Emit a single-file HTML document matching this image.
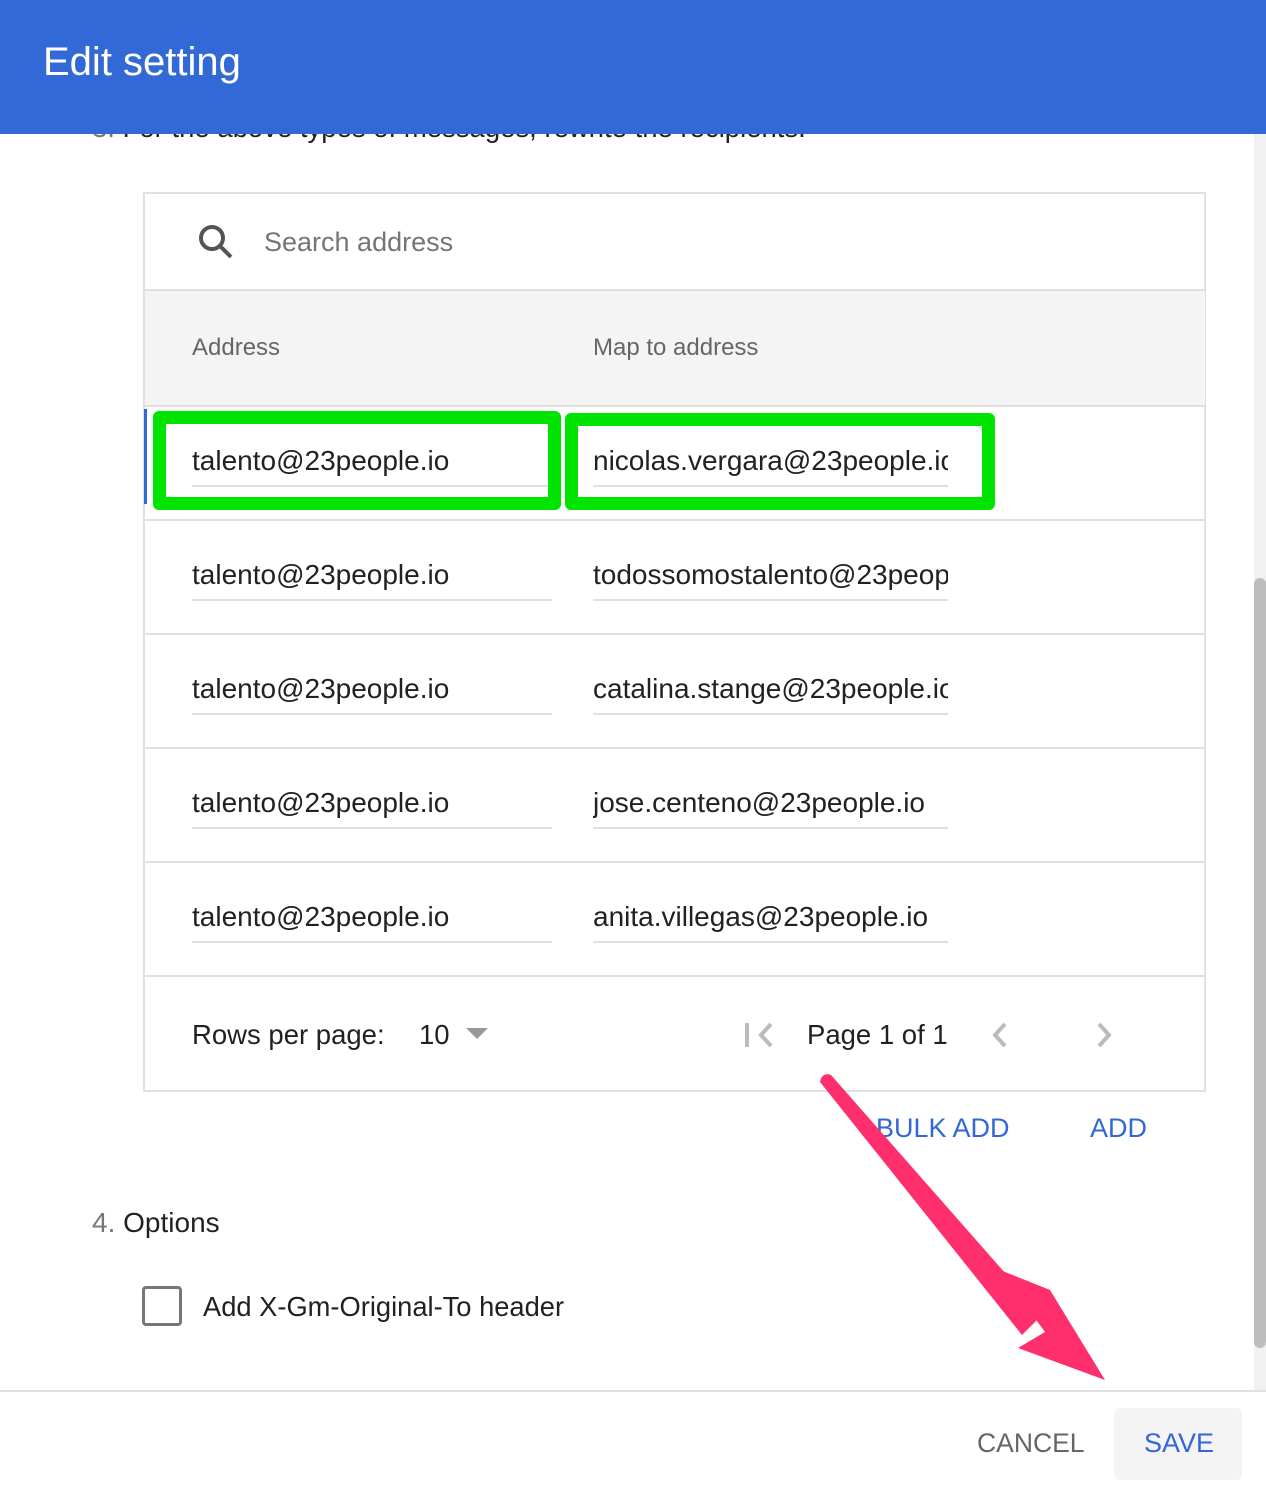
<!DOCTYPE html>
<html><head><meta charset="utf-8"><style>
*{margin:0;padding:0;box-sizing:border-box}
body{width:1266px;height:1486px;background:#fff;position:relative;overflow:hidden;font-family:"Liberation Sans",Arial,sans-serif;color:#202124}
.a{position:absolute;white-space:nowrap}
.hdr{position:absolute;left:0;top:0;width:1266px;height:134px;background:#3369d6;z-index:5}
.t26{font-size:27.5px}
.row{position:absolute;left:143px;width:1062px;height:114px;border-bottom:2px solid #e0e0e0}
.cell{position:absolute;top:36px;font-size:28px;height:44px;border-bottom:2px solid #e0e0e0;overflow:hidden;white-space:nowrap;padding-top:2px}
.c1{left:49px;width:360px}
.c2{left:450px;width:355px}
.grn{position:absolute;border:13px solid #00e400;border-radius:6px;z-index:3}
</style></head><body>
<div class="hdr"><div class="a" style="left:43px;top:40px;font-size:40px;color:#fff">Edit setting</div></div>
<div class="a t26" style="left:92px;top:112px;color:#202124"><span style="color:#777">3.</span> For the above types of messages, rewrite the recipients.</div>

<div style="position:absolute;left:143px;top:192px;width:1063px;height:900px;border:2px solid #e0e0e0"></div>
<svg class="a" style="left:190px;top:220px" width="50" height="45"><circle cx="22" cy="18" r="11" fill="none" stroke="#555" stroke-width="4"/><line x1="30" y1="26" x2="41" y2="37" stroke="#555" stroke-width="4"/></svg>
<div class="a" style="left:264px;top:227px;color:#757575;font-size:27px">Search address</div>
<div style="position:absolute;left:145px;top:289px;width:1060px;height:118px;background:#f4f4f4;border-top:2px solid #e0e0e0;border-bottom:2px solid #e0e0e0"></div>
<div class="a" style="left:192px;top:334px;font-size:24px;color:#666">Address</div>
<div class="a" style="left:593px;top:334px;font-size:24px;color:#666">Map to address</div>

<div class="row" style="top:407px"><div class="cell c1">talento@23people.io</div><div class="cell c2">nicolas.vergara@23people.io</div></div>
<div style="position:absolute;left:144px;top:409px;width:3px;height:95px;background:#3369d6"></div>
<div class="row" style="top:521px"><div class="cell c1">talento@23people.io</div><div class="cell c2">todossomostalento@23people.io</div></div>
<div class="row" style="top:635px"><div class="cell c1">talento@23people.io</div><div class="cell c2">catalina.stange@23people.io</div></div>
<div class="row" style="top:749px"><div class="cell c1">talento@23people.io</div><div class="cell c2">jose.centeno@23people.io</div></div>
<div class="row" style="top:863px"><div class="cell c1">talento@23people.io</div><div class="cell c2">anita.villegas@23people.io</div></div>

<div class="grn" style="left:153px;top:411px;width:408px;height:99px"></div>
<div class="grn" style="left:565px;top:413px;width:430px;height:97px"></div>

<div class="a t26" style="left:192px;top:1019px">Rows per page:</div>
<div class="a t26" style="left:419px;top:1019px">10</div>
<svg class="a" style="left:464px;top:1026px" width="26" height="14"><path d="M2 2h22l-11 11z" fill="#999"/></svg>
<svg class="a" style="left:742px;top:1020px" width="34" height="30"><rect x="3" y="3" width="4" height="24" fill="#bbb"/><path d="M29 4L19 15l10 11" fill="none" stroke="#bbb" stroke-width="4"/></svg>
<div class="a t26" style="left:807px;top:1019px">Page 1 of 1</div>
<svg class="a" style="left:986px;top:1020px" width="26" height="30"><path d="M19 4L9 15l10 11" fill="none" stroke="#bbb" stroke-width="4"/></svg>
<svg class="a" style="left:1092px;top:1020px" width="26" height="30"><path d="M7 4l10 11-10 11" fill="none" stroke="#bbb" stroke-width="4"/></svg>

<div class="a" style="left:876px;top:1113px;font-size:27px;color:#3367d6">BULK ADD</div>
<div class="a" style="left:1090px;top:1113px;font-size:27px;color:#3367d6">ADD</div>

<div class="a" style="left:92px;top:1207px;font-size:28px"><span style="color:#777">4.</span> Options</div>
<div style="position:absolute;left:142px;top:1286px;width:40px;height:40px;border:3px solid #777;border-radius:4px"></div>
<div class="a" style="left:203px;top:1291px;font-size:27.3px">Add X-Gm-Original-To header</div>

<div style="position:absolute;left:1254px;top:134px;width:12px;height:1256px;background:#f1f1f1"></div>
<div style="position:absolute;left:1254px;top:578px;width:12px;height:770px;background:#bdbdbd;border-radius:6px"></div>

<div style="position:absolute;left:0;top:1390px;width:1266px;height:2px;background:#e0e0e0"></div>
<div class="a" style="left:977px;top:1428px;font-size:26.5px;color:#666">CANCEL</div>
<div style="position:absolute;left:1114px;top:1408px;width:128px;height:72px;background:#f4f4f4;border-radius:6px"></div>
<div class="a" style="left:1144px;top:1428px;font-size:27px;color:#3367d6">SAVE</div>

<svg class="a" style="left:0;top:0;z-index:6" width="1266" height="1486">
<path d="M820 1082 Q822 1072 831 1075 L1042 1315 L1022 1335 Z" fill="#ff2f6d"/>
<path d="M1050 1290 L1105 1380 L1018 1348 L1045 1332 L1000 1270 Z" fill="#ff2f6d"/>
<path d="M1050 1290 L1040 1325 L1005 1275 Z" fill="#ff2f6d"/>
</svg>
</body></html>
